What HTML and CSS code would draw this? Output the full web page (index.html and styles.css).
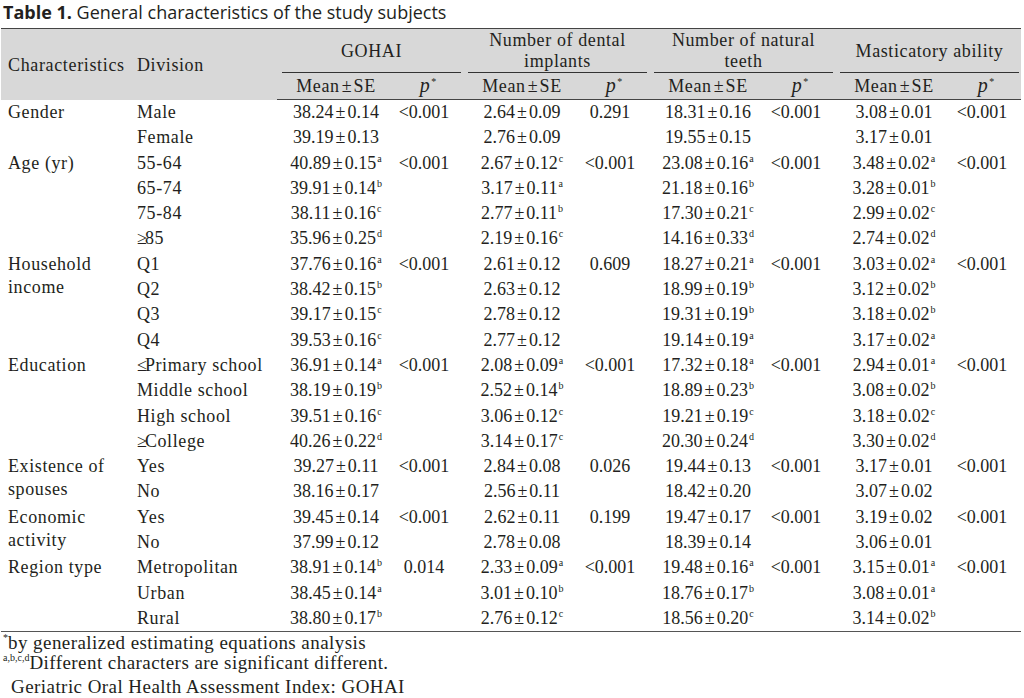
FILE: index.html
```html
<!DOCTYPE html>
<html lang="en">
<head>
<meta charset="utf-8">
<title>Table 1</title>
<link rel="stylesheet" href="styles.css">
</head>
<body>
<div class="page">
  <div class="title"><b>Table 1.</b> General characteristics of the study subjects</div>
  <table class="t">
    <colgroup>
      <col class="c-char"><col class="c-div">
      <col class="c-mean"><col class="c-p">
      <col class="c-mean"><col class="c-p">
      <col class="c-mean"><col class="c-p">
      <col class="c-mean"><col class="c-p">
    </colgroup>
    <thead>
      <tr class="h1">
        <th rowspan="2" class="lbl first">Characteristics</th>
        <th rowspan="2" class="lbl">Division</th>
        <th colspan="2"><div class="grp">GOHAI</div></th>
        <th colspan="2"><div class="grp">Number of dental<br>implants</div></th>
        <th colspan="2"><div class="grp">Number of natural<br>teeth</div></th>
        <th colspan="2"><div class="grp">Masticatory ability</div></th>
      </tr>
      <tr class="h2">
        <th>Mean<span class="pm">±</span>SE</th><th><i>p</i><sup class="st">*</sup></th>
        <th>Mean<span class="pm">±</span>SE</th><th><i>p</i><sup class="st">*</sup></th>
        <th>Mean<span class="pm">±</span>SE</th><th><i>p</i><sup class="st">*</sup></th>
        <th>Mean<span class="pm">±</span>SE</th><th><i>p</i><sup class="st">*</sup></th>
      </tr>
    </thead>
    <tbody>
      <tr><td rowspan="2" class="ch"><div>Gender</div></td><td class="dv">Male</td>
        <td class="m">38.24<span class="pm">±</span>0.14</td><td class="p">&lt;0.001</td>
        <td class="m">2.64<span class="pm">±</span>0.09</td><td class="p">0.291</td>
        <td class="m">18.31<span class="pm">±</span>0.16</td><td class="p">&lt;0.001</td>
        <td class="m">3.08<span class="pm">±</span>0.01</td><td class="p">&lt;0.001</td></tr>
      <tr><td class="dv">Female</td>
        <td class="m">39.19<span class="pm">±</span>0.13</td><td class="p"></td>
        <td class="m">2.76<span class="pm">±</span>0.09</td><td class="p"></td>
        <td class="m">19.55<span class="pm">±</span>0.15</td><td class="p"></td>
        <td class="m">3.17<span class="pm">±</span>0.01</td><td class="p"></td></tr>

      <tr><td rowspan="4" class="ch"><div>Age (yr)</div></td><td class="dv">55-64</td>
        <td class="m">40.89<span class="pm">±</span>0.15<sup>a</sup></td><td class="p">&lt;0.001</td>
        <td class="m">2.67<span class="pm">±</span>0.12<sup>c</sup></td><td class="p">&lt;0.001</td>
        <td class="m">23.08<span class="pm">±</span>0.16<sup>a</sup></td><td class="p">&lt;0.001</td>
        <td class="m">3.48<span class="pm">±</span>0.02<sup>a</sup></td><td class="p">&lt;0.001</td></tr>
      <tr><td class="dv">65-74</td>
        <td class="m">39.91<span class="pm">±</span>0.14<sup>b</sup></td><td class="p"></td>
        <td class="m">3.17<span class="pm">±</span>0.11<sup>a</sup></td><td class="p"></td>
        <td class="m">21.18<span class="pm">±</span>0.16<sup>b</sup></td><td class="p"></td>
        <td class="m">3.28<span class="pm">±</span>0.01<sup>b</sup></td><td class="p"></td></tr>
      <tr><td class="dv">75-84</td>
        <td class="m">38.11<span class="pm">±</span>0.16<sup>c</sup></td><td class="p"></td>
        <td class="m">2.77<span class="pm">±</span>0.11<sup>b</sup></td><td class="p"></td>
        <td class="m">17.30<span class="pm">±</span>0.21<sup>c</sup></td><td class="p"></td>
        <td class="m">2.99<span class="pm">±</span>0.02<sup>c</sup></td><td class="p"></td></tr>
      <tr><td class="dv"><span class="rel">≥</span>85</td>
        <td class="m">35.96<span class="pm">±</span>0.25<sup>d</sup></td><td class="p"></td>
        <td class="m">2.19<span class="pm">±</span>0.16<sup>c</sup></td><td class="p"></td>
        <td class="m">14.16<span class="pm">±</span>0.33<sup>d</sup></td><td class="p"></td>
        <td class="m">2.74<span class="pm">±</span>0.02<sup>d</sup></td><td class="p"></td></tr>

      <tr><td rowspan="4" class="ch"><div>Household<br>income</div></td><td class="dv">Q1</td>
        <td class="m">37.76<span class="pm">±</span>0.16<sup>a</sup></td><td class="p">&lt;0.001</td>
        <td class="m">2.61<span class="pm">±</span>0.12</td><td class="p">0.609</td>
        <td class="m">18.27<span class="pm">±</span>0.21<sup>a</sup></td><td class="p">&lt;0.001</td>
        <td class="m">3.03<span class="pm">±</span>0.02<sup>a</sup></td><td class="p">&lt;0.001</td></tr>
      <tr><td class="dv">Q2</td>
        <td class="m">38.42<span class="pm">±</span>0.15<sup>b</sup></td><td class="p"></td>
        <td class="m">2.63<span class="pm">±</span>0.12</td><td class="p"></td>
        <td class="m">18.99<span class="pm">±</span>0.19<sup>b</sup></td><td class="p"></td>
        <td class="m">3.12<span class="pm">±</span>0.02<sup>b</sup></td><td class="p"></td></tr>
      <tr><td class="dv">Q3</td>
        <td class="m">39.17<span class="pm">±</span>0.15<sup>c</sup></td><td class="p"></td>
        <td class="m">2.78<span class="pm">±</span>0.12</td><td class="p"></td>
        <td class="m">19.31<span class="pm">±</span>0.19<sup>b</sup></td><td class="p"></td>
        <td class="m">3.18<span class="pm">±</span>0.02<sup>b</sup></td><td class="p"></td></tr>
      <tr><td class="dv">Q4</td>
        <td class="m">39.53<span class="pm">±</span>0.16<sup>c</sup></td><td class="p"></td>
        <td class="m">2.77<span class="pm">±</span>0.12</td><td class="p"></td>
        <td class="m">19.14<span class="pm">±</span>0.19<sup>a</sup></td><td class="p"></td>
        <td class="m">3.17<span class="pm">±</span>0.02<sup>a</sup></td><td class="p"></td></tr>

      <tr><td rowspan="4" class="ch"><div>Education</div></td><td class="dv"><span class="rel">≤</span>Primary school</td>
        <td class="m">36.91<span class="pm">±</span>0.14<sup>a</sup></td><td class="p">&lt;0.001</td>
        <td class="m">2.08<span class="pm">±</span>0.09<sup>a</sup></td><td class="p">&lt;0.001</td>
        <td class="m">17.32<span class="pm">±</span>0.18<sup>a</sup></td><td class="p">&lt;0.001</td>
        <td class="m">2.94<span class="pm">±</span>0.01<sup>a</sup></td><td class="p">&lt;0.001</td></tr>
      <tr><td class="dv">Middle school</td>
        <td class="m">38.19<span class="pm">±</span>0.19<sup>b</sup></td><td class="p"></td>
        <td class="m">2.52<span class="pm">±</span>0.14<sup>b</sup></td><td class="p"></td>
        <td class="m">18.89<span class="pm">±</span>0.23<sup>b</sup></td><td class="p"></td>
        <td class="m">3.08<span class="pm">±</span>0.02<sup>b</sup></td><td class="p"></td></tr>
      <tr><td class="dv">High school</td>
        <td class="m">39.51<span class="pm">±</span>0.16<sup>c</sup></td><td class="p"></td>
        <td class="m">3.06<span class="pm">±</span>0.12<sup>c</sup></td><td class="p"></td>
        <td class="m">19.21<span class="pm">±</span>0.19<sup>c</sup></td><td class="p"></td>
        <td class="m">3.18<span class="pm">±</span>0.02<sup>c</sup></td><td class="p"></td></tr>
      <tr><td class="dv"><span class="rel">≥</span>College</td>
        <td class="m">40.26<span class="pm">±</span>0.22<sup>d</sup></td><td class="p"></td>
        <td class="m">3.14<span class="pm">±</span>0.17<sup>c</sup></td><td class="p"></td>
        <td class="m">20.30<span class="pm">±</span>0.24<sup>d</sup></td><td class="p"></td>
        <td class="m">3.30<span class="pm">±</span>0.02<sup>d</sup></td><td class="p"></td></tr>

      <tr><td rowspan="2" class="ch"><div>Existence of<br>spouses</div></td><td class="dv">Yes</td>
        <td class="m">39.27<span class="pm">±</span>0.11</td><td class="p">&lt;0.001</td>
        <td class="m">2.84<span class="pm">±</span>0.08</td><td class="p">0.026</td>
        <td class="m">19.44<span class="pm">±</span>0.13</td><td class="p">&lt;0.001</td>
        <td class="m">3.17<span class="pm">±</span>0.01</td><td class="p">&lt;0.001</td></tr>
      <tr><td class="dv">No</td>
        <td class="m">38.16<span class="pm">±</span>0.17</td><td class="p"></td>
        <td class="m">2.56<span class="pm">±</span>0.11</td><td class="p"></td>
        <td class="m">18.42<span class="pm">±</span>0.20</td><td class="p"></td>
        <td class="m">3.07<span class="pm">±</span>0.02</td><td class="p"></td></tr>

      <tr><td rowspan="2" class="ch"><div>Economic<br>activity</div></td><td class="dv">Yes</td>
        <td class="m">39.45<span class="pm">±</span>0.14</td><td class="p">&lt;0.001</td>
        <td class="m">2.62<span class="pm">±</span>0.11</td><td class="p">0.199</td>
        <td class="m">19.47<span class="pm">±</span>0.17</td><td class="p">&lt;0.001</td>
        <td class="m">3.19<span class="pm">±</span>0.02</td><td class="p">&lt;0.001</td></tr>
      <tr><td class="dv">No</td>
        <td class="m">37.99<span class="pm">±</span>0.12</td><td class="p"></td>
        <td class="m">2.78<span class="pm">±</span>0.08</td><td class="p"></td>
        <td class="m">18.39<span class="pm">±</span>0.14</td><td class="p"></td>
        <td class="m">3.06<span class="pm">±</span>0.01</td><td class="p"></td></tr>

      <tr><td rowspan="3" class="ch"><div>Region type</div></td><td class="dv">Metropolitan</td>
        <td class="m">38.91<span class="pm">±</span>0.14<sup>b</sup></td><td class="p">0.014</td>
        <td class="m">2.33<span class="pm">±</span>0.09<sup>a</sup></td><td class="p">&lt;0.001</td>
        <td class="m">19.48<span class="pm">±</span>0.16<sup>a</sup></td><td class="p">&lt;0.001</td>
        <td class="m">3.15<span class="pm">±</span>0.01<sup>a</sup></td><td class="p">&lt;0.001</td></tr>
      <tr><td class="dv">Urban</td>
        <td class="m">38.45<span class="pm">±</span>0.14<sup>a</sup></td><td class="p"></td>
        <td class="m">3.01<span class="pm">±</span>0.10<sup>b</sup></td><td class="p"></td>
        <td class="m">18.76<span class="pm">±</span>0.17<sup>b</sup></td><td class="p"></td>
        <td class="m">3.08<span class="pm">±</span>0.01<sup>a</sup></td><td class="p"></td></tr>
      <tr><td class="dv">Rural</td>
        <td class="m">38.80<span class="pm">±</span>0.17<sup>b</sup></td><td class="p"></td>
        <td class="m">2.76<span class="pm">±</span>0.12<sup>c</sup></td><td class="p"></td>
        <td class="m">18.56<span class="pm">±</span>0.20<sup>c</sup></td><td class="p"></td>
        <td class="m">3.14<span class="pm">±</span>0.02<sup>b</sup></td><td class="p"></td></tr>
    </tbody>
  </table>
  <div class="notes">
    <p><sup class="fn">*</sup>by generalized estimating equations analysis</p>
    <p><sup class="fn">a,b,c,d</sup>Different characters are significant different.</p>
    <p class="n3">Geriatric Oral Health Assessment Index: GOHAI</p>
  </div>
</div>
</body>
</html>
```

FILE: styles.css
```css
html, body {
  margin: 0;
  padding: 0;
  background: #ffffff;
}

.page {
  width: 1024px;
  color: #231f20;
}

.title {
  font-family: "Open Sans", "Noto Sans", sans-serif;
  font-size: 18px;
  line-height: 24px;
  height: 28px;
  padding-left: 3px;
  color: #231f20;
}

.title b {
  font-weight: 700;
}

.t {
  margin-left: 1px;
  width: 1020px;
  table-layout: fixed;
  border-collapse: collapse;
  font-family: "Liberation Serif", "Times New Roman", serif;
  font-size: 18px;
  letter-spacing: 0.6px;
  color: #231f20;
  border-bottom: 1px solid #555;
}

.c-char { width: 132px; }
.c-div { width: 144px; }
.c-mean { width: 112px; }
.c-p { width: 74px; }

.t thead th {
  background: #d8d8d8;
  font-weight: 400;
  padding: 0;
}

.h1 th {
  border-top: 1px solid #444;
  height: 44px;
}

.h1 th.lbl {
  text-align: left;
  vertical-align: middle;
  padding-left: 4px;
  padding-top: 2px;
}

.h1 th.first {
  padding-left: 7px;
  letter-spacing: 0.65px;
}

.grp {
  height: 44px;
  margin: 0 2px 0 5px;
  border-bottom: 1px solid #333;
  box-sizing: border-box;
  display: flex;
  align-items: center;
  justify-content: center;
  text-align: center;
  line-height: 21px;
  padding-top: 1px;
}

.h2 th {
  height: 25px;
  line-height: 25px;
  text-align: center;
  border-bottom: 1px solid #444;
  vertical-align: middle;
}

.h2 th:nth-child(odd) {
  padding-left: 6px;
}

.h2 th:nth-child(even) {
  padding-right: 0;
  padding-left: 4px;
}

.h2 i {
  font-size: 20px;
}

.st {
  font-size: 10px;
  line-height: 0;
  vertical-align: 10px;
  margin-left: 1px;
}

.pm {
  margin: 0 2px;
  letter-spacing: 0;
}

.h2 .pm {
  margin: 0 2px;
}

.t tbody td {
  padding: 0;
  height: 25.3px;
  line-height: 25.3px;
  white-space: nowrap;
  vertical-align: middle;
}

.t tbody td.ch {
  vertical-align: top;
  padding-left: 7px;
}

.ch div {
  line-height: 23px;
  padding-top: 1px;
}

.t tbody td.dv {
  padding-left: 4px;
}

.rel {
  margin-right: -2px;
  letter-spacing: 0;
}

.t tbody td.m {
  text-align: center;
  padding-left: 6px;
  letter-spacing: 0;
}

.t tbody td.p {
  text-align: center;
  padding-right: 4px;
  letter-spacing: 0;
}

.t sup {
  font-size: 10px;
  line-height: 0;
  vertical-align: 7px;
  letter-spacing: 0;
  margin-left: 1px;
}

.notes {
  font-family: "Liberation Serif", "Times New Roman", serif;
  font-size: 19px;
  letter-spacing: 0.44px;
  color: #231f20;
  padding-left: 3px;
  padding-top: 1px;
}

.notes p {
  margin: 0;
  line-height: 20px;
}

.notes p.n3 {
  margin-top: 4px;
  padding-left: 8px;
}

.fn {
  font-size: 10px;
  line-height: 0;
  vertical-align: 8px;
  letter-spacing: 0;
}
```
